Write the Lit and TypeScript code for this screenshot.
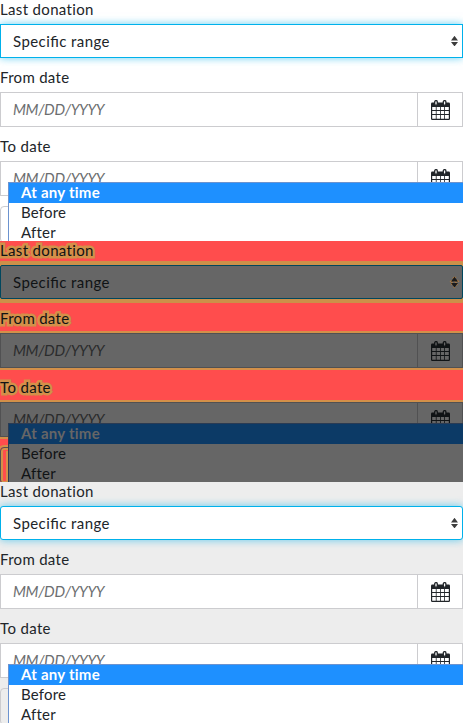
import { LitElement, html, svg, css } from "lit";
import { customElement, property } from "lit/decorators.js";

const calendarIcon = html`<svg class="cal" viewBox="0 0 19 20" width="19" height="20">
  ${svg`
    <path class="ink" d="M1.2 2.6H17.8Q19 2.6 19 3.8V18.8Q19 20 17.8 20H1.2Q0 20 0 18.8V3.8Q0 2.6 1.2 2.6Z"/>
    <path class="cell" d="M1.2 7H4.8V10H1.2ZM5.6 7H9V10H5.6ZM9.8 7H13.2V10H9.8ZM14 7H17.8V10H14Z
      M1.2 11H4.8V14H1.2ZM5.6 11H9V14H5.6ZM9.8 11H13.2V14H9.8ZM14 11H17.8V14H14Z
      M1.2 15H4.8V18.8H1.2ZM5.6 15H9V18.8H5.6ZM9.8 15H13.2V18.8H9.8ZM14 15H17.8V18.8H14Z"/>
    <rect class="ring" x="3.7" y=".6" width="2.6" height="4.6" rx="1.3"/>
    <rect class="ring" x="12.3" y=".6" width="2.6" height="4.6" rx="1.3"/>`}
</svg>`;

@customElement("donation-filter")
export class DonationFilter extends LitElement {
  @property({ reflect: true }) variant = "plain";

  static styles = css`
    :host {
      --bg: #fff;
      --surface: #fff;
      --ink: #212529;
      --hint: #6c6e70;
      --line: #cccccf;
      --focus: #00b1eb;
      --hl: #1e90ff;
      --hl-text: #fff;
      --menu-line: #6c93cf;
      --stroke: 0px;
      --edge: none;
      --glow: 0 0 8px rgba(0, 177, 235, 0.6);
      --radius: 0px;
      display: block;
      position: relative;
      height: 241px;
      overflow: hidden;
      background: var(--bg);
      color: var(--ink);
      font: 15px/20px Lato, "Liberation Sans", sans-serif;
      box-sizing: border-box;
    }
    :host([variant="gray"]) { --bg: #ededed; --radius: 3px; }
    :host([variant="diff"]) {
      --bg: #ff4d4d;
      --surface: #666;
      --ink: #101315;
      --hint: #2b2c2d;
      --line: #515152;
      --focus: #00475e;
      --hl: #0c3a66;
      --hl-text: #666;
      --menu-line: #2b3b53;
      --stroke: 5px;
      --edge: 0 0 0 2px #d39049;
      --glow: 0 0 0 4px #cc9049;
      --radius: 2px;
    }
    * { box-sizing: border-box; }
    .label {
      display: flex;
      align-items: center;
      height: 34px;
      padding-top: 4px;
      white-space: nowrap;
      -webkit-text-stroke: var(--stroke) #d39049;
      paint-order: stroke fill;
    }
    .label.first { height: 24px; padding: 0 0 6px; }
    .select, .date {
      display: flex;
      background: var(--surface);
      border: 1px solid var(--line);
    }
    .select {
      height: 34px;
      align-items: center;
      justify-content: space-between;
      padding: 0 4px 0 12px;
      border-color: var(--focus);
      border-radius: var(--radius);
      box-shadow: var(--glow);
    }
    .date { height: 35px; box-shadow: var(--edge); }
    .hint {
      flex: 1;
      padding: 6px 12px 0;
      font-style: italic;
      letter-spacing: -0.34px;
      color: var(--hint);
    }
    .pick {
      width: 45px;
      padding: 7px 0 0 13px;
      border-left: 1px solid var(--line);
    }
    .cal { display: block; }
    .ink { fill: var(--ink); }
    .cell { fill: var(--surface); }
    .ring { fill: var(--surface); stroke: var(--ink); stroke-width: 1.3; }
    .arrows { display: block; fill: #3c3c3c; }
    :host([variant="diff"]) .arrows {
      fill: #1b1b1b;
      stroke: #b17a3e;
      stroke-width: 1.4;
      paint-order: stroke;
      stroke-dasharray: 2 2;
      overflow: visible;
    }
    .button {
      height: 37px;
      margin-top: 10px;
      border: 1px solid var(--line);
      border-radius: 4px;
      width: 100%;
      box-shadow: var(--edge);
    }
    :host([variant="diff"]) .button {
      box-shadow: 0 0 0 2px #d39049, inset 0 0 0 2px #d39049;
    }
    .menu {
      position: absolute;
      left: 8px;
      right: 0;
      top: 182px;
      height: 80px;
      background: var(--surface);
      border: solid var(--menu-line);
      border-width: 1px 0 0 1px;
    }
    :host([variant="diff"]) .menu { box-shadow: -2px 28px 0 0 #d39049; }
    .item { height: 20px; padding-left: 12px; line-height: 19px; white-space: nowrap; letter-spacing: 0.2px; }
    .item.on { background: var(--hl); color: var(--hl-text); font-weight: 700; letter-spacing: 0.25px; }
    .t-last { letter-spacing: 0.34px; }
    .t-range { letter-spacing: 0.42px; font-feature-settings: "liga" 1; }
    .t-from { letter-spacing: 0.3px; }
    .t-to { letter-spacing: 0.35px; }
  `;

  private dateField() {
    return html`<div class="date">
      <span class="hint">MM/DD/YYYY</span>
      <span class="pick">${calendarIcon}</span>
    </div>`;
  }

  render() {
    return html`
      <div class="label first"><span class="t-last">Last donation</span></div>
      <div class="select">
        <span class="t-range">Specific range</span>
        <svg class="arrows" width="7" height="10" viewBox="0 0 7 10">
          <path d="M3.5 -.2L7 4.4H0ZM0 6H7L3.5 10.4Z" />
        </svg>
      </div>
      <div class="label"><span class="t-from">From date</span></div>
      ${this.dateField()}
      <div class="label"><span class="t-to">To date</span></div>
      ${this.dateField()}
      <div class="button"></div>
      <div class="menu">
        <div class="item on">At any time</div>
        <div class="item">Before</div>
        <div class="item">After</div>
      </div>
    `;
  }
}

@customElement("app-root")
export class AppRoot extends LitElement {
  static styles = css`:host { display: block; width: 463px; height: 723px; overflow: hidden; }`;

  render() {
    return ["plain", "diff", "gray"].map(
      (v) => html`<donation-filter variant=${v}></donation-filter>`
    );
  }
}
